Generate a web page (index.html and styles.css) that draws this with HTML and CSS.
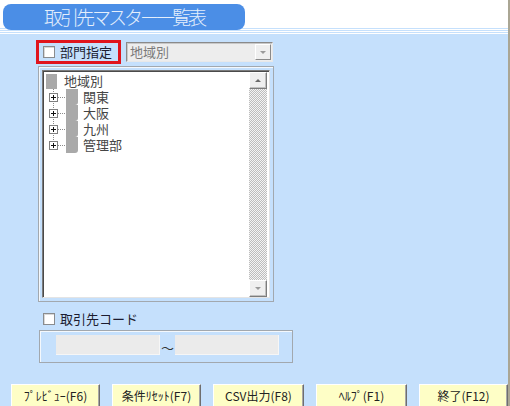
FILE: index.html
```html
<!DOCTYPE html>
<html lang="ja">
<head>
  <meta charset="UTF-8" />
  <title>取引先マスター一覧表</title>
  <link rel="stylesheet" href="styles.css">
</head>
<body>
  <div class="screen">
    <header class="head">
      <div class="title-pill">取引先マスター一覧表</div>
    </header>

    <main class="form">
      <div class="dept-row">
        <label class="chk dept-chk"><span class="box"></span>部門指定</label>
        <div class="select">
          <span class="select-text">地域別</span>
          <span class="select-btn"><span class="tri-down"></span></span>
        </div>
      </div>

      <div class="group tree-frame">
        <div class="listbox">
          <ul class="tree">
            <li class="node root"><span class="icon"></span>地域別</li>
            <li class="node child"><span class="plus"></span><span class="icon"></span>関東</li>
            <li class="node child"><span class="plus"></span><span class="icon"></span>大阪</li>
            <li class="node child"><span class="plus"></span><span class="icon"></span>九州</li>
            <li class="node child last"><span class="plus"></span><span class="icon"></span>管理部</li>
          </ul>
          <div class="vscroll">
            <span class="sbtn"><span class="tri-up"></span></span>
            <span class="track"></span>
            <span class="sbtn"><span class="tri-down"></span></span>
          </div>
        </div>
      </div>

      <label class="chk code-chk"><span class="box"></span>取引先コード</label>
      <div class="group code-frame">
        <span class="field"></span>
        <span class="tilde">〜</span>
        <span class="field"></span>
      </div>
    </main>

    <footer class="fkeys">
      <button class="fkey">ﾌﾟﾚﾋﾞｭｰ(F6)</button>
      <button class="fkey">条件ﾘｾｯﾄ(F7)</button>
      <button class="fkey wide">CSV出力(F8)</button>
      <button class="fkey wide">ﾍﾙﾌﾟ(F1)</button>
      <button class="fkey">終了(F12)</button>
    </footer>
  </div>
</body>
</html>
```

FILE: styles.css
```css
html, body {
  margin: 0;
  padding: 0;
}
body {
  font-family: "Noto Sans CJK JP", "Noto Sans", sans-serif;
  font-size: 13px;
  color: #1c1c30;
}
.screen {
  width: 510px;
  height: 406px;
  overflow: hidden;
  background: #c5e0fc;
  box-shadow: inset -2px 0 #aaa694;
  box-sizing: border-box;
}

/* header: white strip with thin rules under the title */
.head {
  height: 34px;
  display: flex;
  align-items: flex-start;
  background: linear-gradient(to bottom,
    #fff 0 28px, #c5e0fc 28px 29px, #fff 29px 30px,
    #c5e0fc 30px 31px, #fff 31px 32px, #c5e0fc 32px 33px, #fff 33px 34px);
  margin-right: 2px;
}
.title-pill {
  margin: 4px 0 0 3px;
  width: 242px;
  height: 26px;
  border-radius: 8px;
  background: #4b8ee6;
  color: #e4eefc;
  font-size: 19px;
  font-weight: 300;
  line-height: 26px;
  letter-spacing: -3px;
  text-align: center;
}

.form {
  display: flex;
  flex-direction: column;
  align-items: flex-start;
}

/* checkbox + label */
.chk {
  display: flex;
  align-items: center;
  height: 16px;
  line-height: 16px;
  white-space: nowrap;
}
.chk .box {
  width: 12px;
  height: 12px;
  box-sizing: border-box;
  border: 1px solid #8a8c8e;
  background: #fff;
  margin-right: 5px;
  box-shadow: inset 1px 1px #d8d8d8;
}

.dept-row {
  display: flex;
  align-items: center;
  margin: 6px 0 0 36px;
}
.dept-chk {
  width: 85px;
  height: 24px;
  box-sizing: border-box;
  border: 3px solid #e0141c;
  padding-left: 4px;
}
.select {
  margin-left: 5px;
  width: 147px;
  height: 20px;
  box-sizing: border-box;
  border: 1px solid;
  border-color: #8a8a8a #e8e8e8 #e8e8e8 #8a8a8a;
  box-shadow: inset 1px 1px #c8c8c8;
  background: #ededed;
  display: flex;
  align-items: center;
  justify-content: space-between;
  padding: 0 1px 0 3px;
}
.select-text {
  color: #7a7a7a;
  line-height: 16px;
}
.select-btn {
  width: 16px;
  height: 16px;
  box-sizing: border-box;
  border: 1px solid;
  border-color: #fff #8a8a8a #8a8a8a #fff;
  background: #efefef;
  display: flex;
  align-items: center;
  justify-content: center;
}

.tri-down, .tri-up {
  width: 0;
  height: 0;
  border-left: 3px solid transparent;
  border-right: 3px solid transparent;
}
.tri-down { border-top: 3px solid #9a9a9a; }
.tri-up { border-bottom: 3px solid #6a6a6a; }

/* etched group frame */
.group {
  box-sizing: border-box;
  border: 1px solid #a2a8ae;
  box-shadow: inset 1px 1px #f4f8fc;
}
.tree-frame {
  margin: 2px 0 0 38px;
  width: 236px;
  height: 236px;
  padding: 3px;
}
.listbox {
  height: 100%;
  box-sizing: border-box;
  border: 1px solid;
  border-color: #7c7c7c #e4e4e4 #e4e4e4 #7c7c7c;
  box-shadow: inset 1px 1px #4a4a4a;
  background: #fff;
  display: flex;
  padding: 1px 2px 0 1px;
}

.tree {
  flex: 1;
  list-style: none;
  margin: 0;
  padding: 1px 0 0 2px;
  color: #454545;
}
.node {
  height: 16px;
  line-height: 16px;
  display: flex;
  align-items: center;
  white-space: nowrap;
}
.node .icon {
  background: #a9a9a9;
  flex-shrink: 0;
}
.root .icon {
  width: 11px;
  height: 15px;
  margin-right: 7px;
}
.child {
  padding-left: 3px;
  background:
    repeating-linear-gradient(to bottom, #8a8a8a 0 1px, transparent 1px 2px) 7px 0 / 1px 100% no-repeat,
    repeating-linear-gradient(to right, #8a8a8a 0 1px, transparent 1px 2px) 12px 8px / 7px 1px no-repeat;
}
.child.last {
  background:
    repeating-linear-gradient(to bottom, #8a8a8a 0 1px, transparent 1px 2px) 7px 0 / 1px 8px no-repeat,
    repeating-linear-gradient(to right, #8a8a8a 0 1px, transparent 1px 2px) 12px 8px / 7px 1px no-repeat;
}
.plus {
  width: 9px;
  height: 9px;
  box-sizing: border-box;
  border: 1px solid #7f7f7f;
  background:
    linear-gradient(#111, #111) center / 5px 1px no-repeat,
    linear-gradient(#111, #111) center / 1px 5px no-repeat,
    #fff;
  margin-right: 8px;
  flex-shrink: 0;
}
.child .icon {
  width: 12px;
  height: 16px;
  border-radius: 0 0 3px 0;
  margin-right: 5px;
}

.vscroll {
  width: 18px;
  display: flex;
  flex-direction: column;
}
.sbtn {
  height: 17px;
  box-sizing: border-box;
  border: 1px solid;
  border-color: #fff #7c7c7c #7c7c7c #fff;
  box-shadow: inset -1px -1px #c0c0c0;
  background: #efefef;
  display: flex;
  align-items: center;
  justify-content: center;
}
.track {
  flex: 1;
  background: repeating-conic-gradient(#bdbdbd 0 25%, #f4f4f4 0 50%) 0 0 / 2px 2px;
}

.code-chk {
  margin: 9px 0 0 43px;
}
.code-frame {
  margin: 3px 0 0 39px;
  width: 254px;
  height: 33px;
  display: flex;
  align-items: flex-start;
  padding: 4px 0 0 16px;
}
.field {
  width: 104px;
  height: 20px;
  background: #ebebeb;
  box-shadow: inset -1px -1px #f6f6f6;
}
.tilde {
  width: 15px;
  text-align: center;
  line-height: 26px;
  color: #333;
}

/* function key buttons along the bottom */
.fkeys {
  display: flex;
  gap: 12px;
  margin: 21px 0 0 11px;
}
.fkey {
  width: 89px;
  height: 26px;
  box-sizing: border-box;
  margin: 0;
  padding: 0 0 3px;
  font-family: "Noto Sans CJK JP", "Noto Sans", sans-serif;
  font-size: 12px;
  color: #222;
  background: #fefec6;
  border: 1px solid;
  border-color: #fff #6e6e6e #6e6e6e #fff;
  box-shadow: inset -1px -1px #a8a8a8;
}
.fkey.wide {
  width: 91px;
}
```
